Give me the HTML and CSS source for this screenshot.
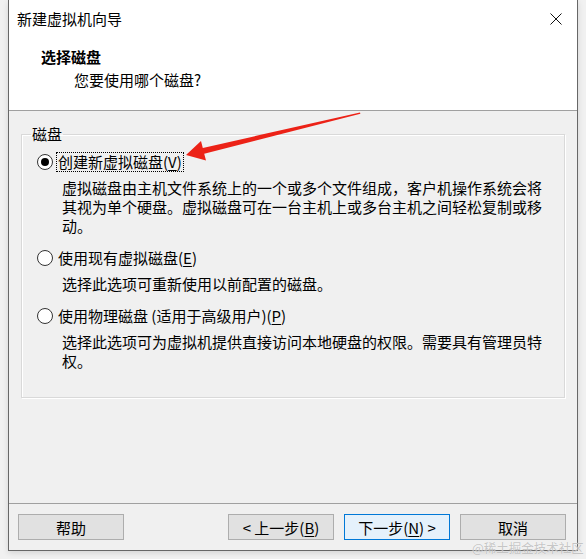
FILE: index.html
```html
<!DOCTYPE html>
<html>
<head>
    <meta charset="utf-8">
    <link rel="stylesheet" href="styles.css">
</head>
<body>
    <div class="window">
        <!-- Title bar -->
        <div class="titlebar">
            <span class="title">新建虚拟机向导</span>
            <svg class="close" width="12" height="12" viewBox="0 0 12 12">
                <path d="M0.5 0.5 L11.5 11.5 M11.5 0.5 L0.5 11.5" stroke="#111" stroke-width="1" fill="none"/>
            </svg>
        </div>

        <!-- Wizard header -->
        <div class="header">
            <div class="header-title">选择磁盘</div>
            <div class="header-sub">您要使用哪个磁盘?</div>
        </div>

        <!-- Options -->
        <div class="content">
            <fieldset class="group">
                <legend>磁盘</legend>

                <div class="option">
                    <div class="option-row">
                        <span class="radio checked"></span>
                        <span class="option-label focused">创建新虚拟磁盘(<u>V</u>)</span>
                    </div>
                    <p class="option-desc">虚拟磁盘由主机文件系统上的一个或多个文件组成，客户机操作系统会将其视为单个硬盘。虚拟磁盘可在一台主机上或多台主机之间轻松复制或移动。</p>
                </div>

                <div class="option">
                    <div class="option-row">
                        <span class="radio"></span>
                        <span class="option-label">使用现有虚拟磁盘(<u>E</u>)</span>
                    </div>
                    <p class="option-desc">选择此选项可重新使用以前配置的磁盘。</p>
                </div>

                <div class="option last">
                    <div class="option-row">
                        <span class="radio"></span>
                        <span class="option-label">使用物理磁盘 (适用于高级用户)(<u>P</u>)</span>
                    </div>
                    <p class="option-desc">选择此选项可为虚拟机提供直接访问本地硬盘的权限。需要具有管理员特权。</p>
                </div>
            </fieldset>
        </div>

        <!-- Buttons -->
        <div class="footer">
            <button class="btn">帮助</button>
            <div class="spacer"></div>
            <button class="btn">&lt; 上一步(<u>B</u>)</button>
            <button class="btn primary">下一步(<u>N</u>) &gt;</button>
            <button class="btn">取消</button>
        </div>
    </div>

    <!-- Red annotation arrow drawn over the dialog -->
    <svg class="annotation" width="586" height="559" viewBox="0 0 586 559">
        <polygon points="186,155 201,141 202.8,147.9 360,112.4 360.4,113.8 204.2,153.7 206,160.5" fill="#ec2217"/>
    </svg>

    <div class="watermark">@稀土掘金技术社区</div>
</body>
</html>
```

FILE: styles.css
```css
/* General */
body {
    margin: 0;
    background-color: #f1f1f1;
    font-family: "Noto Sans CJK SC", "Noto Sans", sans-serif;
    font-size: 15px;
    color: #000;
    position: relative;
    width: 586px;
    height: 559px;
    overflow: hidden;
}

.window {
    margin-left: 8px;
    width: 568px;
    height: 550px;
    border-left: 1px solid #676767;
    border-right: 1px solid #676767;
    border-bottom: 1px solid #676767;
    background-color: #f0f0f0;
    display: flex;
    flex-direction: column;
    box-shadow: 0 2px 6px rgba(0, 0, 0, 0.12);
}

/* Title bar */
.titlebar {
    height: 38px;
    background-color: #fff;
    display: flex;
    align-items: center;
    padding: 0 15px 0 8px;
}

.title {
    flex: 1;
    line-height: 20px;
}

.close {
    display: block;
}

/* Header */
.header {
    background-color: #fff;
    padding: 9px 0 20px 32px;
    border-bottom: 1px solid #a0a0a0;
}

.header-title {
    font-weight: bold;
    line-height: 20px;
}

.header-sub {
    margin-top: 3px;
    padding-left: 33px;
    line-height: 20px;
}

/* Group box */
.content {
    flex: 1;
    padding: 13px 12px 0 12px;
}

.group {
    margin: 0;
    padding: 8px 0 27px 0;
    border: 1px solid #d9d9d9;
    box-shadow: inset 1px 1px 0 #fff, 1px 1px 0 #fff;
}

.group legend {
    margin-left: 9px;
    padding: 0 1px;
    line-height: 20px;
}

.option {
    padding-left: 15px;
    margin-bottom: 13px;
}

.option + .option.last {
    margin-top: 1px;
}

.option.last {
    margin-bottom: 0;
}

.option-row {
    height: 20px;
    display: flex;
    align-items: center;
}

.radio {
    box-sizing: border-box;
    width: 16px;
    height: 16px;
    border: 1px solid #333;
    border-radius: 50%;
    background-color: #fff;
    display: flex;
    align-items: center;
    justify-content: center;
    flex-shrink: 0;
}

.radio.checked::after {
    content: "";
    width: 8px;
    height: 8px;
    border-radius: 50%;
    background-color: #000;
}

.option-label {
    margin-left: 3px;
    padding: 0 1px;
    line-height: 18px;
    border: 1px dotted transparent;
}

.option-label.focused {
    border-color: #000;
}

.option-label u,
.btn u {
    text-underline-offset: 2px;
}

.option-desc {
    margin: 6px 0 0 25px;
    width: 485px;
    line-height: 19px;
}

/* Buttons */
.footer {
    border-top: 1px solid #a0a0a0;
    padding: 10px 11px 10px 9px;
    display: flex;
    gap: 10px;
}

.spacer {
    flex: 1;
}

.btn {
    width: 106px;
    height: 26px;
    padding: 0;
    font-family: inherit;
    font-size: 15px;
    color: #000;
    background-color: #e1e1e1;
    border: 1px solid #adadad;
}

.btn.primary {
    background-color: #e5f1fb;
    border-color: #0078d7;
}

/* Overlays */
.annotation {
    position: absolute;
    left: 0;
    top: 0;
    pointer-events: none;
}

.watermark {
    position: absolute;
    left: 472px;
    top: 539px;
    font-size: 12.5px;
    line-height: 18px;
    color: rgba(150, 150, 150, 0.55);
    text-shadow: 0 0 1px #fff;
}
```
